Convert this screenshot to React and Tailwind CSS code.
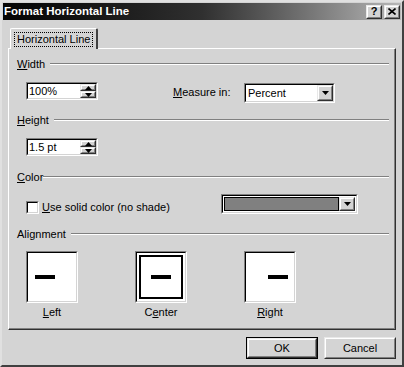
import React from 'react';

/* win2000 style bevels */
function Sunken({ className = '', inner = '', children }) {
  return (
    <div
      className={`border border-t-[#808080] border-l-[#808080] border-b-white border-r-white ${className}`}
    >
      <div
        className={`w-full h-full border border-t-black border-l-black border-b-[#d4d4d4] border-r-[#d4d4d4] ${inner}`}
      >
        {children}
      </div>
    </div>
  );
}

function Raised({ className = '', inner = '', children }) {
  return (
    <div
      className={`border border-t-[#e8e8e8] border-l-[#e8e8e8] border-b-[#303030] border-r-[#303030] bg-[#d4d4d4] ${className}`}
    >
      <div
        className={`w-full h-full border border-t-white border-l-white border-b-[#808080] border-r-[#808080] flex items-center justify-center ${inner}`}
      >
        {children}
      </div>
    </div>
  );
}

const Arrow = ({ up }) => (
  <svg width="7" height="4" viewBox="0 0 7 4">
    <polygon points={up ? '3.5,0 7,4 0,4' : '0,0 7,0 3.5,4'} fill="#000" />
  </svg>
);

function GroupHeader({ children, gap = 'ml-[5px]' }) {
  return (
    <div className="mt-[8px] h-[14px] flex items-center pl-[8px] pr-[6px]">
      <span className="leading-none">{children}</span>
      <div className={`flex-1 h-[2px] border-t border-t-[#808080] border-b border-b-white ${gap}`} />
    </div>
  );
}

function SpinBox({ value }) {
  return (
    <Sunken className="w-[72px] h-[18px]" inner="bg-white flex items-center">
      <span className="pl-[1px] flex-1 leading-none">{value}</span>
      <div className="flex flex-col w-[16px] h-full">
        <Raised className="h-1/2" inner="">
          <Arrow up />
        </Raised>
        <Raised className="h-1/2" inner="">
          <Arrow />
        </Raised>
      </div>
    </Sunken>
  );
}

function AlignBox({ label, pos, selected }) {
  const dash =
    pos === 'left' ? 'justify-start pl-[7px]' : pos === 'right' ? 'justify-end pr-[6px]' : 'justify-center';
  return (
    <div className="flex flex-col items-center w-[52px]">
      <Sunken className="w-[52px] h-[52px]" inner="bg-white">
        {selected ? (
          <div className="w-full h-full p-[2px]">
            <div className="w-full h-full border-2 border-black flex items-center justify-center">
              <div className="w-[20px] h-[4px] bg-black" />
            </div>
          </div>
        ) : (
          <div className={`w-full h-full flex items-center ${dash}`}>
            <div className="w-[20px] h-[4px] bg-black" />
          </div>
        )}
      </Sunken>
      <span className="mt-[4px] leading-none">{label}</span>
    </div>
  );
}

export default function App() {
  return (
    <div className="w-[404px] h-[367px] bg-[#d4d4d4] border-2 border-t-[#e0e0e0] border-l-[#e0e0e0] border-r-[#404040] border-b-[#404040] p-[1px] flex flex-col text-[11px] text-black font-['Liberation_Sans',Arial,sans-serif] overflow-hidden">
      {/* title bar */}
      <div className="h-[17px] flex items-center justify-between bg-gradient-to-r from-[#050505] via-[#303030] to-[#b8b8b8] pl-[1px] pr-[1px]">
        <span className="text-white font-bold text-[11.5px] leading-none">Format Horizontal Line</span>
        <div className="flex gap-[2px]">
          <Raised className="w-[16px] h-[14px]">
            <span className="font-bold text-[11px] leading-none">?</span>
          </Raised>
          <Raised className="w-[16px] h-[14px]">
            <svg width="8" height="7" viewBox="0 0 8 7">
              <path d="M0.5 0.5 L7.5 6.5 M7.5 0.5 L0.5 6.5" stroke="#000" strokeWidth="1.6" />
            </svg>
          </Raised>
        </div>
      </div>

      {/* tab */}
      <div className="mt-[8px] ml-[7px] flex relative z-10">
        <div className="h-[21px] -mb-[1px] px-[3px] flex items-center bg-[#d4d4d4] border-t border-l border-t-white border-l-white border-r-2 border-r-[#404040] rounded-t-[2px]">
          <span className="border border-dotted border-black px-[2px] py-[1px] leading-none">
            Horizontal Line
          </span>
        </div>
      </div>

      {/* panel */}
      <div className="ml-[5px] mr-[5px] h-[282px] border-t border-l border-t-white border-l-white border-r border-b border-r-[#303030] border-b-[#303030] shadow-[inset_-1px_-1px_0_#808080] flex flex-col">
        <GroupHeader>
          <u>W</u>idth
        </GroupHeader>
        <div className="mt-[11px] h-[21px] flex items-start pl-[17px]">
          <SpinBox value="100%" />
          <span className="ml-[75px] w-[71px] self-center leading-none">
            <u>M</u>easure in:
          </span>
          <Sunken className="mt-[1px] w-[91px] h-[20px]" inner="bg-white flex items-center">
            <span className="flex-1 pl-[2px] leading-none">Percent</span>
            <Raised className="w-[16px] h-full">
              <Arrow />
            </Raised>
          </Sunken>
        </div>

        <div className="mt-[2px]" />
        <GroupHeader>
          <u>H</u>eight
        </GroupHeader>
        <div className="mt-[11px] pl-[17px] flex">
          <SpinBox value="1.5 pt" />
        </div>

        <div className="mt-[6px]" />
        <GroupHeader gap="ml-0">
          <u>C</u>olor
        </GroupHeader>
        <div className="mt-[10px] h-[20px] flex pl-[17px]">
          <div className="w-[195px] flex items-center h-[13px] mt-[7px]">
            <Sunken className="w-[13px] h-[13px]" inner="bg-white" />
            <span className="ml-[3px] leading-none">
              <u>U</u>se solid color (no shade)
            </span>
          </div>
          <Sunken className="w-[137px] h-[20px]" inner="bg-white flex items-center p-[1px]">
            <div className="flex-1 h-full border border-black bg-[#808080]" />
            <Raised className="w-[16px] h-full">
              <Arrow />
            </Raised>
          </Sunken>
        </div>

        <div className="mt-[5px]" />
        <GroupHeader>Alignment</GroupHeader>
        <div className="mt-[10px] flex pl-[17px] gap-[57px]">
          <AlignBox label={<><u>L</u>eft</>} pos="left" />
          <AlignBox label={<>C<u>e</u>nter</>} pos="center" selected />
          <AlignBox label={<><u>R</u>ight</>} pos="right" />
        </div>
      </div>

      {/* buttons */}
      <div className="mt-[7px] flex justify-end gap-[6px] pr-[5px]">
        <div className="border border-black">
          <Raised className="w-[70px] h-[20px]">
            <span className="leading-none">OK</span>
          </Raised>
        </div>
        <Raised className="w-[72px] h-[22px]">
          <span className="leading-none">Cancel</span>
        </Raised>
      </div>
    </div>
  );
}
